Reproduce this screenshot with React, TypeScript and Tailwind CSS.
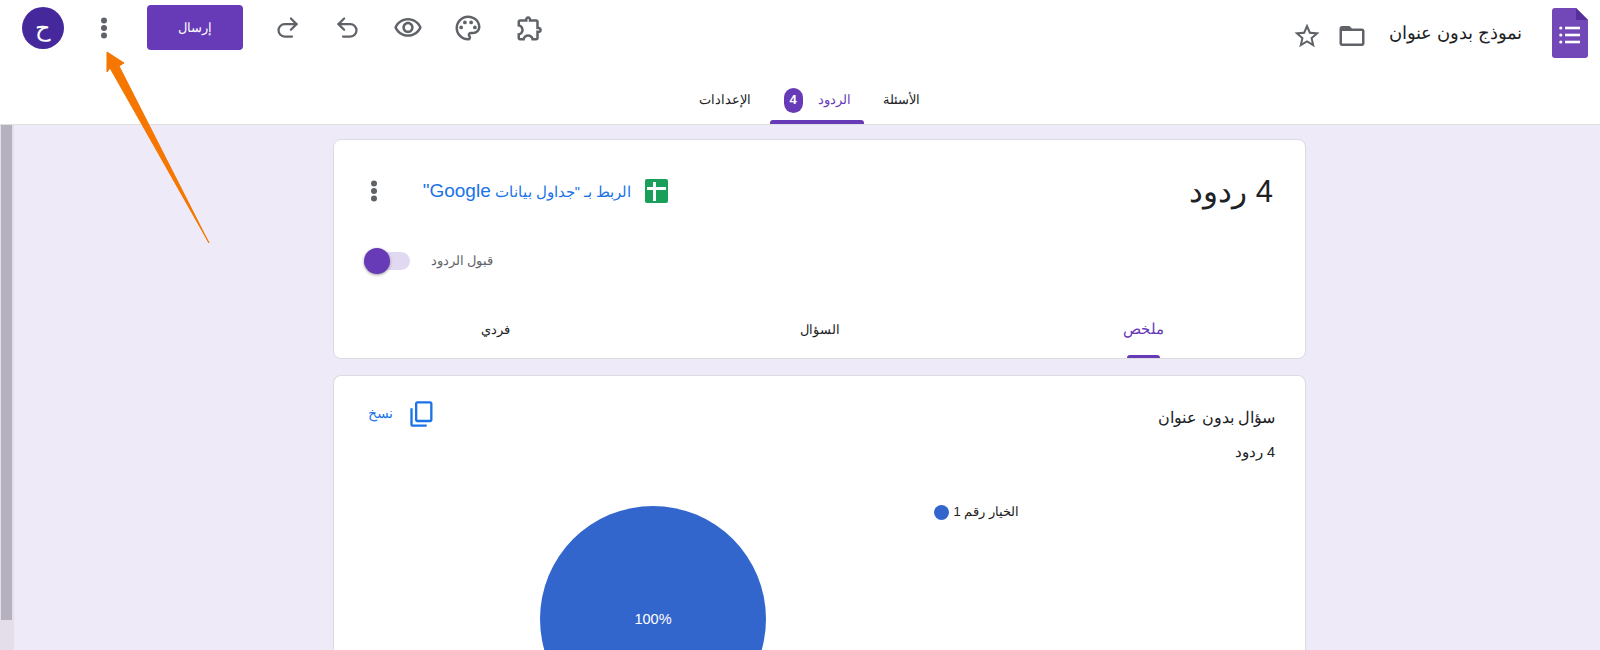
import * as React from "react";

function Kebab() {
  return (
    <svg width="24" height="24" viewBox="0 0 24 24" className="fill-[#5f6368] shrink-0">
      <circle cx="12" cy="4.5" r="3" />
      <circle cx="12" cy="12" r="3" />
      <circle cx="12" cy="19.5" r="3" />
    </svg>
  );
}

function FormsLogo() {
  return (
    <svg width="36" height="50" viewBox="0 0 36 50" className="shrink-0">
      <path d="M3 0h21l12 12v35a3 3 0 0 1-3 3H3a3 3 0 0 1-3-3V3a3 3 0 0 1 3-3z" fill="#7248b9" />
      <path d="M24 0l12 12H24z" fill="#56309a" />
      <g fill="#fff">
        <circle cx="8.8" cy="20" r="1.6" />
        <circle cx="8.8" cy="27" r="1.6" />
        <circle cx="8.8" cy="34" r="1.6" />
        <rect x="13" y="18.7" width="15" height="2.6" />
        <rect x="13" y="25.7" width="15" height="2.6" />
        <rect x="13" y="32.7" width="15" height="2.6" />
      </g>
    </svg>
  );
}

function Toolbar() {
  return (
    <div className="flex h-[55px] items-center pl-[22px]">
      <svg width="30" height="30" viewBox="0 0 24 24" className="ml-[32px] fill-[#5f6368] shrink-0">
        <path d="M10.5 4.5c.28 0 .5.22.5.5v2h6v6h2c.28 0 .5.22.5.5s-.22.5-.5.5h-2v6h-2.12c-.68-1.75-2.39-3-4.38-3s-3.7 1.25-4.38 3H4v-2.12c1.75-.68 3-2.39 3-4.38 0-1.99-1.24-3.7-2.99-4.38L4 7h6V5c0-.28.22-.5.5-.5m0-2C9.12 2.5 8 3.62 8 5H4c-1.1 0-1.99.9-1.99 2v3.8h.29c1.49 0 2.7 1.21 2.7 2.7s-1.21 2.7-2.7 2.7H2V20c0 1.1.9 2 2 2h3.8v-.3c0-1.49 1.21-2.7 2.7-2.7s2.7 1.21 2.7 2.7v.3H17c1.1 0 2-.9 2-2v-4c1.38 0 2.5-1.12 2.5-2.5S20.38 11 19 11V7c0-1.1-.9-2-2-2h-4c0-1.38-1.12-2.5-2.5-2.5z" />
      </svg>
      <svg width="30" height="30" viewBox="0 0 24 24" className="ml-[30px] fill-[#5f6368] shrink-0">
        <path d="M12 22C6.49 22 2 17.51 2 12S6.49 2 12 2s10 4.04 10 9c0 3.31-2.69 6-6 6h-1.77c-.28 0-.5.22-.5.5 0 .12.05.23.13.33.41.47.64 1.06.64 1.67 0 1.38-1.12 2.5-2.5 2.5zm0-18c-4.41 0-8 3.59-8 8s3.59 8 8 8c.28 0 .5-.22.5-.5 0-.16-.08-.28-.14-.35-.41-.46-.63-1.05-.63-1.65 0-1.38 1.12-2.5 2.5-2.5H16c2.21 0 4-1.79 4-4 0-3.86-3.59-7-8-7z" />
        <circle cx="6.5" cy="11.5" r="1.5" />
        <circle cx="9.5" cy="7.5" r="1.5" />
        <circle cx="14.5" cy="7.5" r="1.5" />
        <circle cx="17.5" cy="11.5" r="1.5" />
      </svg>
      <svg width="30" height="30" viewBox="0 0 24 24" className="ml-[32px] fill-[#5f6368] shrink-0">
        <path d="M12 6c3.79 0 7.17 2.13 8.82 5.5C19.17 14.87 15.79 17 12 17s-7.17-2.13-8.82-5.5C4.83 8.13 8.21 6 12 6m0-2C7 4 2.73 7.11 1 11.5 2.73 15.89 7 19 12 19s9.27-3.11 11-7.5C21.27 7.11 17 4 12 4zm0 5c1.38 0 2.5 1.12 2.5 2.5S13.38 14 12 14s-2.5-1.12-2.5-2.5S10.62 9 12 9m0-2c-2.48 0-4.5 2.02-4.5 4.5S9.52 16 12 16s4.5-2.02 4.5-4.5S14.48 7 12 7z" />
      </svg>
      <svg width="27" height="27" viewBox="0 0 24 24" fill="none" stroke="#5f6368" strokeWidth="2" strokeLinecap="round" strokeLinejoin="round" className="ml-[33px] shrink-0">
        <path d="M9 14 4 9l5-5" />
        <path d="M4 9h10.5a5.5 5.5 0 0 1 0 11H8" />
      </svg>
      <svg width="27" height="27" viewBox="0 0 24 24" fill="none" stroke="#5f6368" strokeWidth="2" strokeLinecap="round" strokeLinejoin="round" className="ml-[31px] shrink-0">
        <path d="m15 14 5-5-5-5" />
        <path d="M20 9H9.5a5.5 5.5 0 0 0 0 11H16" />
      </svg>
      <button className="flex h-[45px] w-[96px] items-center justify-center rounded-[4px] bg-[#673ab7] text-[13px] text-white shrink-0">
        إرسال
      </button>
      <div className="mr-[31px] ml-[28px]">
        <Kebab />
      </div>
      <div className="flex h-[42px] w-[42px] items-center justify-center rounded-full bg-[#45289b] text-[24px] text-white shrink-0">
        ح
      </div>
    </div>
  );
}

function Header() {
  return (
    <header className="h-[125px] shrink-0 border-b border-[#e0e0e0] bg-white">
      <div className="flex h-[76px] items-start justify-between">
        <div className="flex h-[66px] items-center pr-[12px]">
          <FormsLogo />
          <div className="mr-[30px] w-[135px] text-[18px] text-[#202124] whitespace-nowrap">نموذج بدون عنوان</div>
          <svg width="30" height="30" viewBox="0 0 24 24" className="mr-[20px] mt-[6px] fill-[#5f6368] shrink-0">
            <path d="M20 6h-8l-2-2H4c-1.1 0-1.99.9-1.99 2L2 18c0 1.1.9 2 2 2h16c1.1 0 2-.9 2-2V8c0-1.1-.9-2-2-2zm0 12H4V8h16v10z" />
          </svg>
          <svg width="30" height="30" viewBox="0 0 24 24" className="mr-[15px] mt-[6px] fill-[#5f6368] shrink-0">
            <path d="M22 9.24l-7.19-.62L12 2 9.19 8.63 2 9.24l5.46 4.73L5.82 21 12 17.27 18.18 21l-1.63-7.03L22 9.24zM12 15.4l-3.76 2.27 1-4.28-3.32-2.88 4.38-.38L12 6.1l1.71 4.04 4.38.38-3.32 2.88 1 4.28L12 15.4z" />
          </svg>
        </div>
        <Toolbar />
      </div>
      <nav className="flex h-[48px] gap-[18px] pr-[680px] text-[13px] text-[#202124]">
        <div className="flex h-full w-[38px] items-center justify-center whitespace-nowrap">الأسئلة</div>
        <div className="flex h-full w-[94px] flex-col">
          <div className="flex flex-1 items-center justify-center gap-[15px] pt-[4px] text-[#673ab7] whitespace-nowrap">
            <span>الردود</span>
            <span className="flex h-[25px] w-[19px] items-center justify-center rounded-full bg-[#673ab7] text-[13px] font-bold text-white">4</span>
          </div>
          <div className="h-[4px] rounded-t-[3px] bg-[#673ab7]" />
        </div>
        <div className="flex h-full w-[54px] items-center justify-center whitespace-nowrap">الإعدادات</div>
      </nav>
    </header>
  );
}

function SummaryCard() {
  return (
    <section className="flex h-[220px] flex-col rounded-[8px] border border-[#dadce0] bg-white">
      <div className="mt-[23px] flex h-[56px] items-center justify-between pr-[32px] pl-[28px]">
        <h1 className="text-[31px] leading-none font-normal text-[#202124]">4 ردود</h1>
        <div className="flex items-center">
          <svg width="23" height="24" viewBox="0 0 23 24" className="shrink-0">
            <rect width="23" height="24" rx="2" fill="#1a9f5b" />
            <path d="M8 3h3v5h10v3H11v11H8V11H2V8h6z" fill="#fff" />
          </svg>
          <a className="mr-[14px] w-[207px] text-[14.5px] text-[#1a73e8] whitespace-nowrap">
            الربط بـ "جداول بيانات <span className="text-[19px]">Google"</span>
          </a>
          <div className="mr-[38px]">
            <Kebab />
          </div>
        </div>
      </div>
      <div className="mt-[29px] flex h-[26px] items-center justify-end pl-[30px]">
        <span className="text-[12.5px] text-[#5f6368] whitespace-nowrap">قبول الردود</span>
        <div className="relative mr-[21px] h-[18px] w-[46px] rounded-full bg-[#e1d8f1]">
          <div className="absolute top-[-4px] left-0 h-[26px] w-[26px] rounded-full bg-[#673ab7] shadow-[0_1px_3px_rgba(0,0,0,0.4)]" />
        </div>
      </div>
      <div className="mt-auto flex text-[13px] text-[#202124]">
        <div className="flex flex-1 flex-col items-center text-[#673ab7]">
          <div className="flex h-[50px] items-center text-[14.5px]">ملخص</div>
          <div className="h-[3px] w-[33px] rounded-t-[3px] bg-[#673ab7]" />
        </div>
        <div className="flex flex-1 flex-col items-center">
          <div className="flex h-[50px] items-center">السؤال</div>
        </div>
        <div className="flex flex-1 flex-col items-center">
          <div className="flex h-[50px] items-center">فردي</div>
        </div>
      </div>
    </section>
  );
}

function QuestionCard() {
  return (
    <section className="flex-1 overflow-hidden rounded-t-[8px] border border-b-0 border-[#dadce0] bg-white pt-[30px] pr-[30px] pl-[34px]">
      <div className="flex items-start justify-between">
        <div>
          <h2 className="h-[24px] text-[16px] leading-[24px] font-normal text-[#202124]">سؤال بدون عنوان</h2>
          <div className="mt-[14px] h-[16px] text-[14.5px] leading-[16px] text-[#202124]">4 ردود</div>
        </div>
        <div className="mt-[-6px] flex items-center gap-[15px]">
          <svg width="28" height="28" viewBox="0 0 24 24" className="fill-[#1a73e8] shrink-0">
            <g transform="matrix(1 0 0 -1 0 24)">
              <path d="M16 1H4c-1.1 0-2 .9-2 2v14h2V3h12V1zm3 4H8c-1.1 0-2 .9-2 2v14c0 1.1.9 2 2 2h11c1.1 0 2-.9 2-2V7c0-1.1-.9-2-2-2zm0 16H8V7h11v14z" />
            </g>
          </svg>
          <span className="text-[13.5px] text-[#1a73e8]">نسخ</span>
        </div>
      </div>
      <div className="mt-[46px] flex items-start pr-[256px]">
        <div className="mt-[-2px] flex h-[16px] w-[85px] items-center justify-between text-[13px] text-[#222] whitespace-nowrap">
          <span>الخيار رقم 1</span>
          <span className="h-[15px] w-[15px] rounded-full bg-[#3366cc]" />
        </div>
        <svg width="226" height="226" viewBox="0 0 226 226" className="mr-[168px] shrink-0">
          <circle cx="113" cy="113" r="113" fill="#3366cc" />
          <text x="113" y="118" textAnchor="middle" fontSize="14.5" fill="#fff">100%</text>
        </svg>
      </div>
    </section>
  );
}

export default function App() {
  return (
    <div dir="rtl" className="relative flex h-[650px] w-[1600px] flex-col overflow-hidden bg-white font-['Liberation_Sans','Noto_Sans',sans-serif]">
      <Header />
      <main className="flex min-h-0 flex-1 bg-[#eeeaf8]">
        <div className="flex flex-1 flex-col gap-[16px] pt-[14px] pr-[294px] pl-[319px]">
          <SummaryCard />
          <QuestionCard />
        </div>
        <div className="h-full w-[14px] shrink-0 bg-[#e3deea] pl-[1px] pr-[2px]">
          <div className="h-[495px] bg-[#b5b1bf]" />
        </div>
      </main>
      <svg width="240" height="260" viewBox="0 0 240 260" className="pointer-events-none absolute top-0 left-0">
        <polygon points="107,52 124,63 119,66 209,243 110,68 107,72" fill="#f57600" stroke="#f57600" strokeWidth="1" strokeLinejoin="round" />
      </svg>
    </div>
  );
}
